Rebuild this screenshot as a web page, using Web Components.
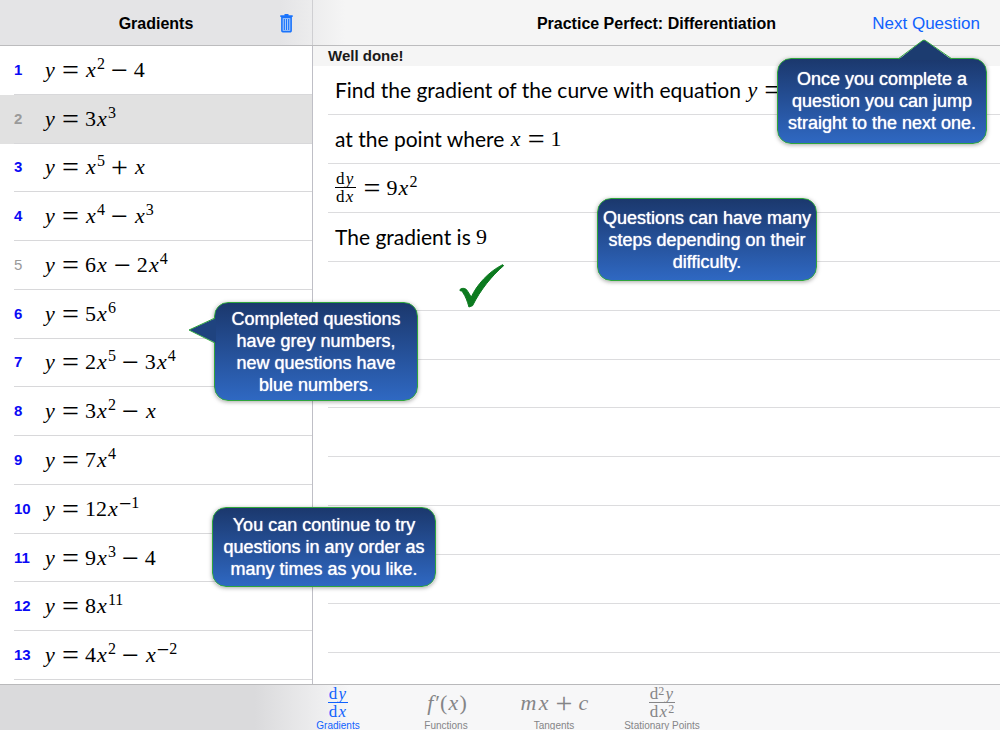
<!DOCTYPE html>
<html lang="en">
<head>
<meta charset="utf-8">
<title>Practice Perfect: Differentiation</title>
<style>
  body { margin: 0; font-family: "Liberation Sans", Arial, sans-serif; color: #000; background: #fff; }
</style>
</head>
<body>
<practice-app>
  <nav-bar slot="nav"></nav-bar>

  <question-list slot="list">
    <question-row n="1" eq="y = x^2 - 4"></question-row>
    <question-row n="2" eq="y = 3x^3" done selected></question-row>
    <question-row n="3" eq="y = x^5 + x"></question-row>
    <question-row n="4" eq="y = x^4 - x^3"></question-row>
    <question-row n="5" eq="y = 6x - 2x^4" done></question-row>
    <question-row n="6" eq="y = 5x^6"></question-row>
    <question-row n="7" eq="y = 2x^5 - 3x^4"></question-row>
    <question-row n="8" eq="y = 3x^2 - x"></question-row>
    <question-row n="9" eq="y = 7x^4"></question-row>
    <question-row n="10" eq="y = 12x^{-1}"></question-row>
    <question-row n="11" eq="y = 9x^3 - 4"></question-row>
    <question-row n="12" eq="y = 8x^{11}"></question-row>
    <question-row n="13" eq="y = 4x^2 - x^{-2}"></question-row>
  </question-list>

  <work-sheet slot="sheet" heading="Well done!">
    <work-line>Find the gradient of the curve with equation <math-text expr="y ="></math-text></work-line>
    <work-line>at the point where <math-text expr="x = 1"></math-text></work-line>
    <work-line><math-frac top="dy" bottom="dx"></math-frac><math-text expr=" = 9x^2"></math-text></work-line>
    <work-line>The gradient is <math-text expr="9"></math-text></work-line>
    <work-line><tick-mark></tick-mark></work-line>
    <work-line></work-line>
    <work-line></work-line>
    <work-line></work-line>
    <work-line></work-line>
    <work-line></work-line>
    <work-line></work-line>
    <work-line></work-line>
  </work-sheet>

  <tab-bar slot="tabs">
    <tab-item label="Gradients" active><math-frac top="dy" bottom="dx"></math-frac></tab-item>
    <tab-item label="Functions"><math-text expr="f′(x)"></math-text></tab-item>
    <tab-item label="Tangents"><math-text expr="mx + c"></math-text></tab-item>
    <tab-item label="Stationary Points"><math-frac top="d^2y" bottom="dx^2"></math-frac></tab-item>
  </tab-bar>

  <help-callout slot="help" class="next" arrow="up">Once you complete a<br>question you can jump<br>straight to the next one.</help-callout>
  <help-callout slot="help" class="steps">Questions can have many<br>steps depending on their<br>difficulty.</help-callout>
  <help-callout slot="help" class="done" arrow="left">Completed questions<br>have grey numbers,<br>new questions have<br>blue numbers.</help-callout>
  <help-callout slot="help" class="order">You can continue to try<br>questions in any order as<br>many times as you like.</help-callout>
</practice-app>

<script>
class BaseElement extends HTMLElement {
  render(html) {
    if (!this.shadowRoot) this.attachShadow({ mode: 'open' });
    this.shadowRoot.innerHTML = html;
  }
}

/* Turns a short expression such as "y = 4x^2 - x^{-2}" into typeset spans. */
function typeset(expr) {
  const tokens = expr.match(/\^\{[^}]*\}|\^.|[0-9]+|[a-z]|\S/g) || [];
  return tokens.map(t => {
    if (t[0] === '^') return `<sup>${typeset(t.replace(/[\^{}]/g, ''))}</sup>`;
    if (t === 'd') return '<span>d</span>';
    if (/[a-z]/.test(t)) return `<i class="${t === 'm' ? 'wide' : t === 'c' || t === 'f' ? 'slim' : ''}">${t}</i>`;
    if (/[=+-]/.test(t)) return `<span class="op">${t === '-' ? '−' : t}</span>`;
    return `<span>${t}</span>`;
  }).join('');
}

const mathStyle = `
  i { display: inline-block; width: 12px; text-align: center; }
  i.wide { width: 18px; }
  i.slim { width: 10px; }
  .op { font-size: 30px; line-height: 0; margin: 0 6px; vertical-align: -3px; }
  sup { font-size: 16px; line-height: 0; vertical-align: 8px; }
  sup .op { font-size: 22px; margin: 0; }
`;

customElements.define('math-text', class extends BaseElement {
  connectedCallback() {
    this.render(`<style>
      :host { display: inline-block; font: 22px/28px "Liberation Serif", "Times New Roman", serif; white-space: nowrap; }
      ${mathStyle}
    </style>${typeset(this.getAttribute('expr'))}`);
  }
});

customElements.define('math-frac', class extends BaseElement {
  connectedCallback() {
    this.render(`<style>
      :host { display: inline-flex; flex-direction: column; align-items: center; vertical-align: middle;
              font: 17px/17px "Liberation Serif", "Times New Roman", serif; white-space: nowrap; }
      ${mathStyle}
      i { width: 10px; }
      sup { font-size: 12px; vertical-align: 4px; }
      .top { border-bottom: 1px solid currentColor; padding: 0 1px; }
    </style><div class="top">${typeset(this.getAttribute('top'))}</div><div>${typeset(this.getAttribute('bottom'))}</div>`);
  }
});

customElements.define('practice-app', class extends BaseElement {
  connectedCallback() {
    this.render(`<style>
      :host { position: relative; display: grid; height: 100vh; overflow: hidden;
              grid-template-columns: 313px 1fr; grid-template-rows: 46px 1fr 46px; }
      slot[name=nav], slot[name=tabs] { display: grid; grid-column: 1 / -1; }
      slot[name=list], slot[name=sheet] { display: grid; min-height: 0; }
      ::slotted(help-callout) { position: absolute; box-sizing: border-box; }
      ::slotted(.next) { right: 13px; top: 58px; width: 210px; height: 86px; }
      ::slotted(.steps) { left: 597px; top: 198px; width: 220px; height: 83px; }
      ::slotted(.done) { left: 214px; top: 302px; width: 204px; height: 99px; }
      ::slotted(.order) { left: 212px; top: 507px; width: 224px; height: 80px; }
    </style>
    <slot name="nav"></slot><slot name="list"></slot><slot name="sheet"></slot><slot name="tabs"></slot><slot name="help"></slot>`);
  }
});

customElements.define('nav-bar', class extends BaseElement {
  connectedCallback() {
    this.render(`<style>
      :host { display: grid; grid-template-columns: 313px 1fr; box-sizing: border-box; height: 46px;
              border-bottom: 1px solid #bcbcbe;
              background: linear-gradient(90deg, #e4e4e6 280px, #f5f5f5 345px); }
      h1 { margin: 0; font-size: 16px; line-height: 20px; font-weight: bold; grid-column: 2; white-space: nowrap; }
      .pane { display: grid; grid-template-columns: 1fr auto 1fr; align-items: center; padding-top: 2px; }
      .side { border-right: 1px solid #cfcfd2; }
      button { grid-column: 3; justify-self: end; border: 0; padding: 0; background: none; font: inherit; color: #0f62fe; }
      .trash { margin-right: 19px; height: 20px; }
      .next { margin-right: 20px; font-size: 17px; line-height: 20px; white-space: nowrap; }
      svg { display: block; }
    </style>
    <div class="pane side"><h1>Gradients</h1>
      <button class="trash" aria-label="Delete"><svg width="13" height="20" viewBox="0 0 13 20">
        <path d="M4.500 0h4v1.300h4.200v1.800H.3V1.300h4.200z" fill="#1a73fb"/>
        <path d="M1.900 3.500h9.200v13.200a.9.9 0 0 1-.9.9H2.800a.9.9 0 0 1-.9-.9z" fill="#b5d2fa" stroke="#1a73fb" stroke-width="1.600"/>
        <path d="M4.300 5v11M6.500 5v11M8.700 5v11" stroke="#1a73fb" stroke-width="1.200"/>
      </svg></button></div>
    <div class="pane"><h1>Practice Perfect: Differentiation</h1><button class="next">Next Question</button></div>`);
  }
});

customElements.define('question-list', class extends BaseElement {
  connectedCallback() {
    this.render(`<style>
      :host { display: grid; grid-template-rows: repeat(13, 1fr); padding-bottom: 4px; border-right: 1px solid #bfbfc6; min-height: 0; }
    </style><slot></slot>`);
  }
});

customElements.define('question-row', class extends BaseElement {
  connectedCallback() {
    this.render(`<style>
      :host { display: grid; min-height: 0; }
      :host([selected]) { background: #e1e1e1; }
      button { display: grid; grid-template-columns: 30px 1fr; align-items: center; margin: 0 0 0 14px; padding: 0;
               border: 0; border-bottom: 1px solid #d8d8da; background: none; text-align: left; color: #000; min-height: 0; }
      .n { font: bold 15px/20px "Liberation Sans", Arial, sans-serif; color: #0a0af5; }
      :host([done]) .n { color: #9a9a9a; font-weight: normal; }
      :host([selected]) .n { font-weight: bold; }
    </style><button><span class="n">${this.getAttribute('n')}</span><math-text expr="${this.getAttribute('eq')}"></math-text></button>`);
  }
});

customElements.define('work-sheet', class extends BaseElement {
  connectedCallback() {
    this.render(`<style>
      :host { display: grid; grid-template-rows: 20px repeat(12, 1fr); padding-bottom: 31px; min-height: 0; min-width: 0; }
      h2 { margin: 0; padding-left: 15px; font-size: 15px; line-height: 20px; background: #f5f5f5; color: #1a1a1a; }
    </style><h2>${this.getAttribute('heading')}</h2><slot></slot>`);
  }
});

customElements.define('work-line', class extends BaseElement {
  connectedCallback() {
    this.render(`<style>
      :host { display: flex; align-items: center; min-height: 0; margin-left: 15px; padding-left: 7px; border-bottom: 1px solid #dcdcde;
              font: 21px/28px Lato, "Noto Sans", sans-serif; white-space: pre; }
      ::slotted(math-frac) { margin-right: 2px; }
    </style><slot></slot>`);
  }
});

customElements.define('tick-mark', class extends BaseElement {
  connectedCallback() {
    this.render(`<style>
      :host { display: block; padding-left: 124px; }
      svg { display: block; }
    </style><svg width="46" height="44" viewBox="57 43 137 133" role="img" aria-label="Correct">
      <path d="M59 120C67 114 77 116 82 125L93 143C109 107 144 67 188 45L191 48C154 80 121 121 97 169L86 173C81 155 76 141 68 130C66 125 63 123 59 124Z" fill="#0c7a1f" stroke="#0c7a1f" stroke-width="3" stroke-linejoin="round"/>
    </svg>`);
  }
});

customElements.define('tab-bar', class extends BaseElement {
  connectedCallback() {
    this.render(`<style>
      :host { display: flex; justify-content: center; box-sizing: border-box; height: 46px; overflow: hidden;
              border-top: 1px solid #b9b9bb;
              background: linear-gradient(90deg, #dadadc 255px, #f7f7f8 350px); }
    </style><slot></slot>`);
  }
});

customElements.define('tab-item', class extends BaseElement {
  connectedCallback() {
    this.render(`<style>
      :host { display: block; width: 108px; }
      button { display: grid; grid-template-rows: 35px 11px; justify-items: center; align-items: center; width: 100%;
               margin: 0; padding: 0; border: 0; background: none; color: #858587;
               font: 10px/11px "Liberation Sans", Arial, sans-serif; }
      :host([active]) button { color: #0f62fe; }
    </style><button><slot></slot><span>${this.getAttribute('label')}</span></button>`);
  }
});

customElements.define('help-callout', class extends BaseElement {
  connectedCallback() {
    const arrow = this.getAttribute('arrow');
    const shapes = {
      up: '<svg class="up" width="56" height="21" viewBox="0 0 56 21"><path d="M1 21L25 2Q27 0 29 2L55 21Z" fill="#1c3c70"/><path d="M1 20L25 2Q27 0 29 2L55 20" fill="none" stroke="#2fa53c"/></svg>',
      left: '<svg class="left" width="28" height="28" viewBox="0 0 28 28"><path d="M28 1L1 13L28 26Z" fill="#1f437f"/><path d="M27 1L1 13L27 26" fill="none" stroke="#2fa53c"/></svg>'
    };
    this.render(`<style>
      :host { display: flex; align-items: center; justify-content: center; border: 1px solid #2fa53c; border-radius: 14px;
              background: linear-gradient(#1b386d, #2f68c2); box-shadow: 0 1px 4px rgba(0, 0, 0, .35);
              color: #fff; text-align: center; font-size: 18px; line-height: 22px; white-space: nowrap;
              text-shadow: 0 0 1px #fff; }
      svg { position: absolute; display: block; }
      .up { left: 119px; top: -20px; }
      .left { left: -27px; top: 14px; }
    </style>${shapes[arrow] || ''}<div><slot></slot></div>`);
  }
});
</script>
</body>
</html>
